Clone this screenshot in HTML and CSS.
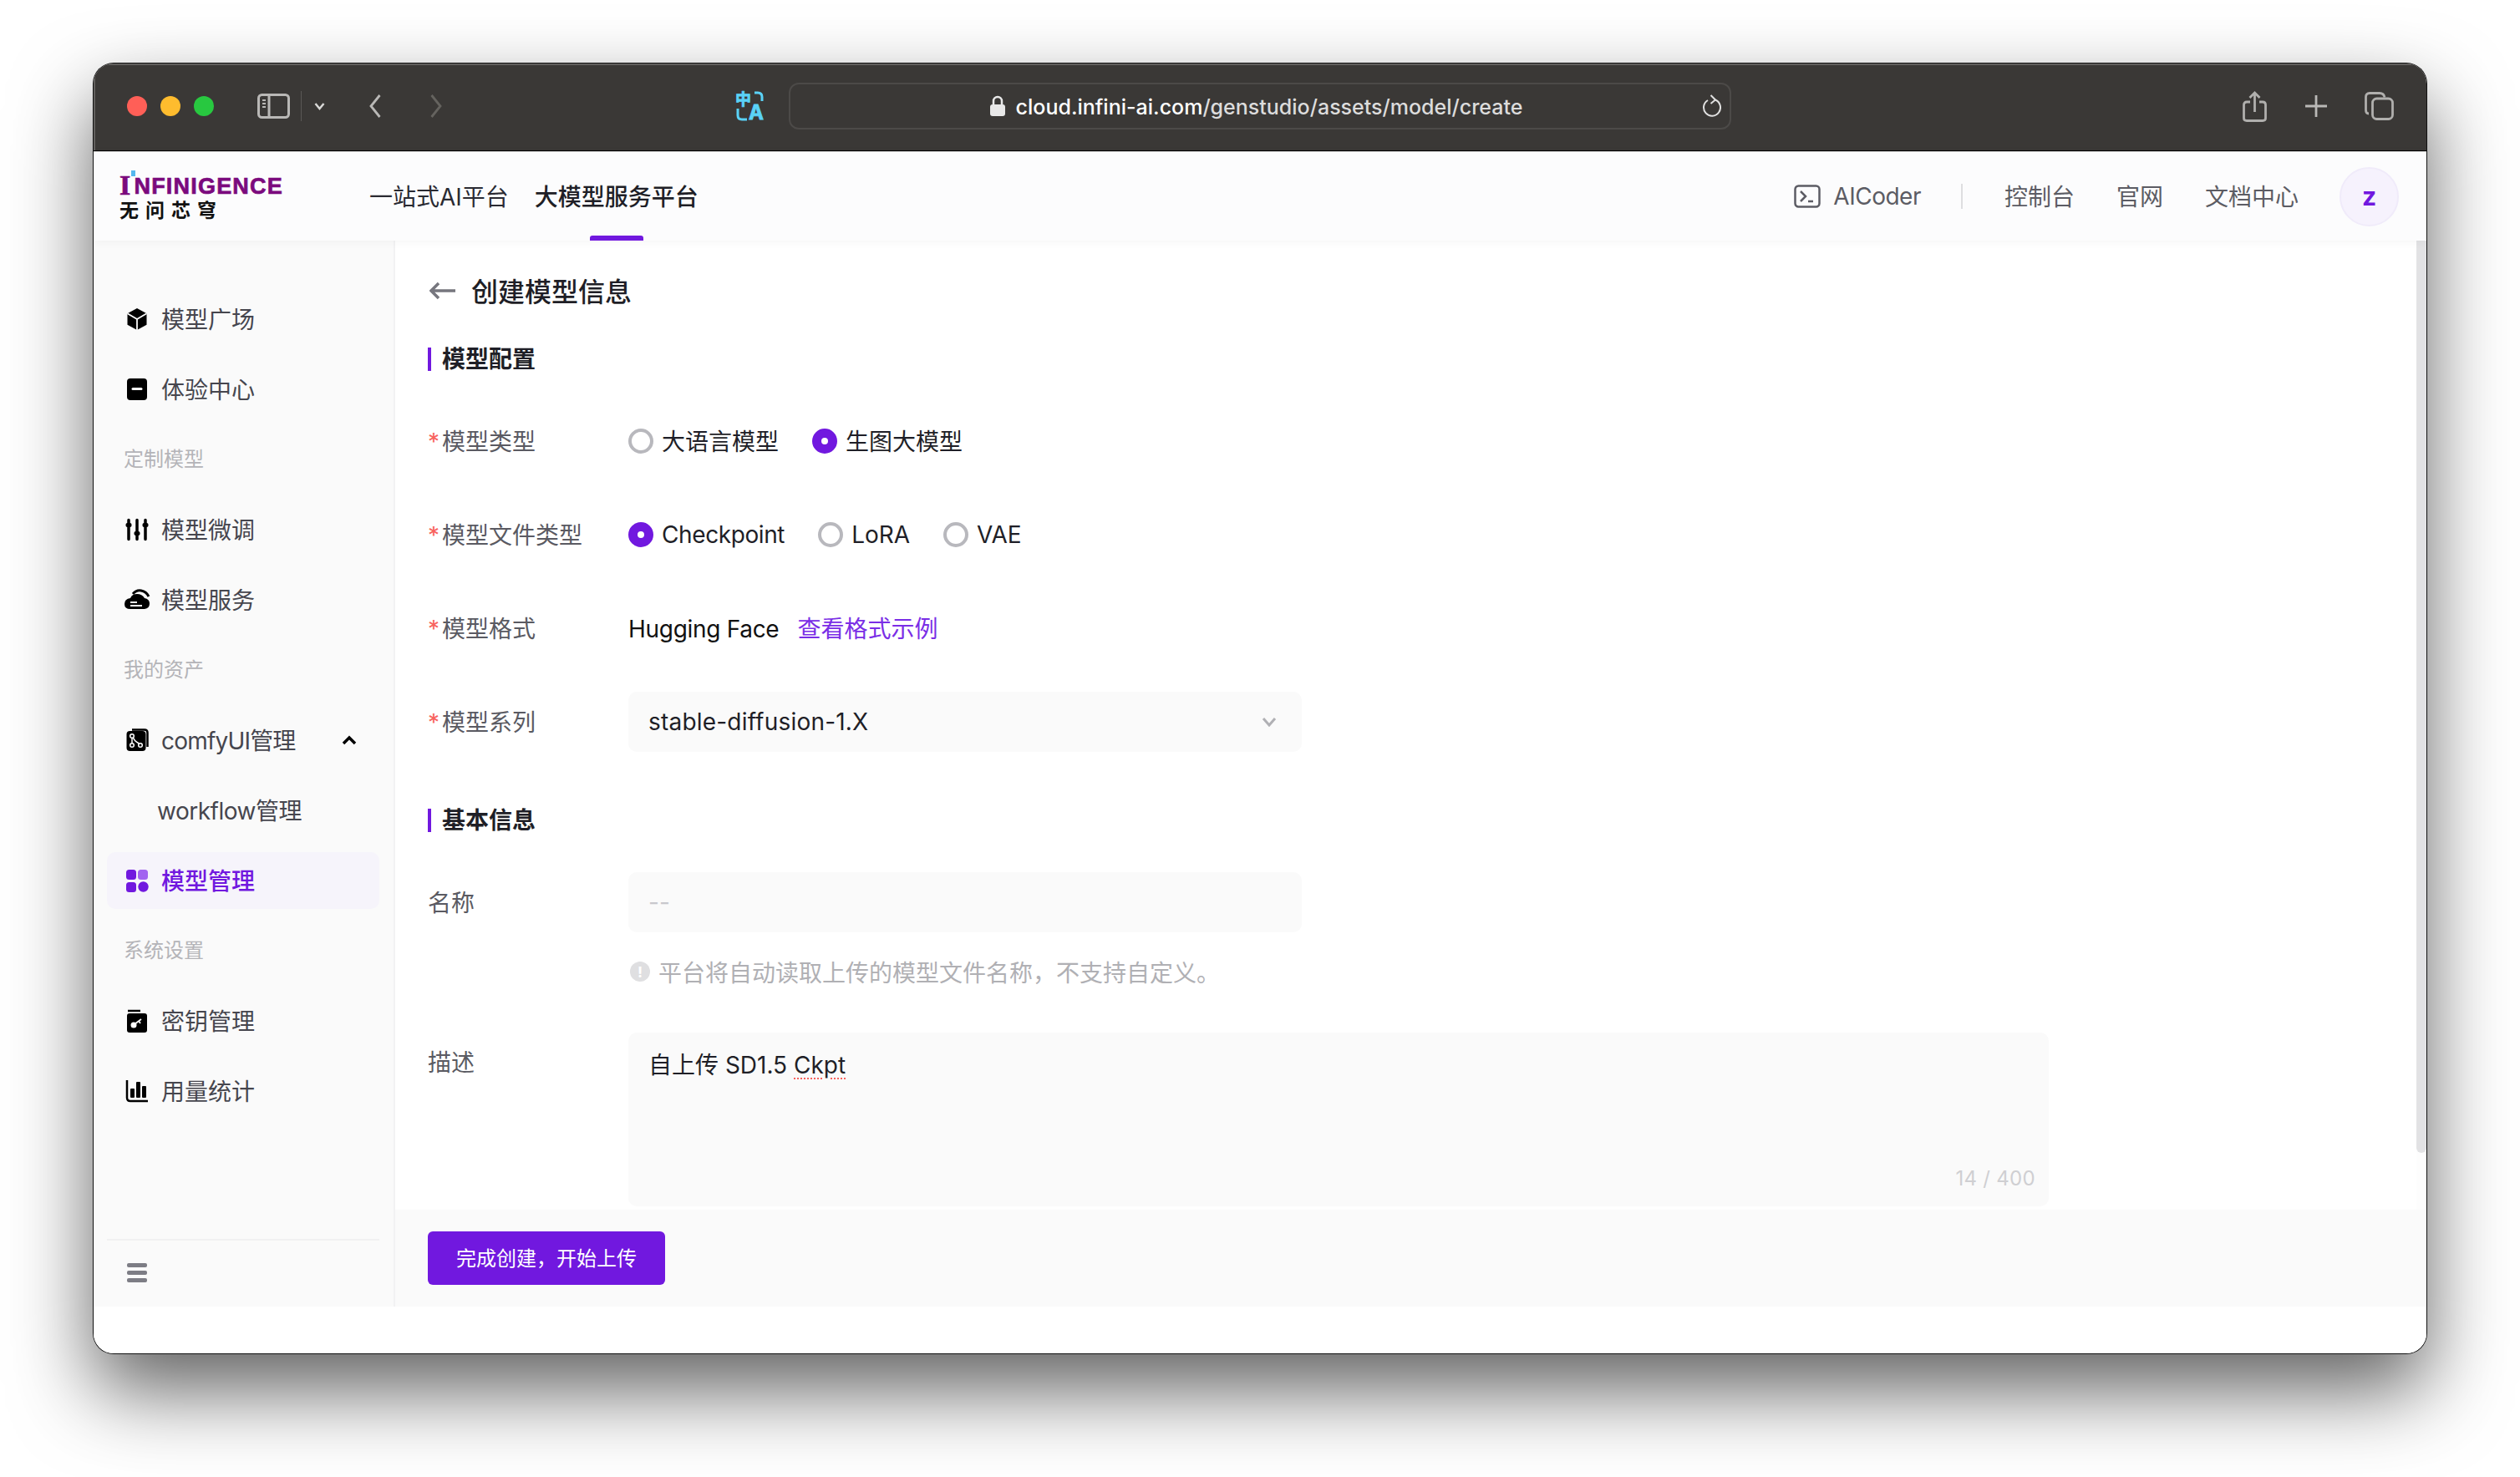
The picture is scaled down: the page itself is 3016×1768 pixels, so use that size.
FILE: index.html
```html
<!DOCTYPE html>
<html lang="zh">
<head>
<meta charset="utf-8">
<title>创建模型信息</title>
<link rel="stylesheet" href="styles.css">
</head>
<body>
<div class="window">
  <div class="toolbar">
    <span class="light red"></span><span class="light yellow"></span><span class="light green"></span>
    <svg class="t-sidebar" viewBox="0 0 39 30"><rect x="1.500" y="1.500" width="36" height="27" rx="4"/><path d="M14 1.500v27"/><path class="thin" d="M6 8h4M6 12h4M6 16h4"/></svg>
    <span class="t-div"></span>
    <svg class="t-chev" viewBox="0 0 13 10"><path d="M1.500 2l5 6 5-6"/></svg>
    <svg class="t-back" viewBox="0 0 14 30"><path d="M12.500 2L2 15l10.500 13"/></svg>
    <svg class="t-fwd" viewBox="0 0 14 30"><path d="M1.500 2L12 15 1.500 28"/></svg>
    <svg class="t-trans" viewBox="0 0 36 36"><text x="0" y="17" class="tr-zh">中</text><text x="16" y="34" class="tr-a">A</text><path d="M23 2h4q5 0 5 5v5M3 21v8q0 5 5 5h6"/></svg>
    <div class="url">
      <span></span>
      <div class="url-center">
        <svg class="lock" viewBox="0 0 20 26"><path class="shackle" d="M5 12V7a5 5 0 0 1 10 0v5"/><rect x="1" y="11" width="18" height="14" rx="3"/></svg>
        <span class="url-text"><span class="url-host">cloud.infini-ai.com</span>/genstudio/assets/model/create</span>
      </div>
      <svg class="reload" viewBox="0 0 24 28"><path d="M17 6.500A10 10 0 1 1 8 7"/><path d="M11.500 1l5.500 5.500-5.500 4.500"/></svg>
    </div>
    <svg class="t-share" viewBox="0 0 29 37"><path d="M9 13H5q-3.500 0-3.500 3.500v16q0 3 3.500 3h19q3.500 0 3.500-3v-16q0-3.500-3.500-3.500h-4M14.500 25V2M8.500 8l6-6 6 6"/></svg>
    <svg class="t-plus" viewBox="0 0 28 28"><path d="M14 1v26M1 14h26"/></svg>
    <svg class="t-tabs" viewBox="0 0 35 34"><path d="M5 26q-3.500 0-3.500-4V6q0-4.500 4.500-4.500h12q5 0 6 5"/><rect x="9.500" y="8" width="24" height="24.500" rx="5"/></svg>
  </div>

  <header class="header">
    <div class="logo">
      <div class="logo-en"><span class="logo-i">I</span>NFINIGENCE<span class="logo-dot"></span></div>
      <div class="logo-zh">无问芯穹</div>
    </div>
    <nav class="nav">
      <a class="nav-item">一站式AI平台</a>
      <a class="nav-item active">大模型服务平台</a>
    </nav>
    <div class="header-right">
      <svg class="coder-icon" viewBox="0 0 32 28"><rect x="1.500" y="1.500" width="29" height="25" rx="4"/><path d="M8 8l6 6-6 6M17 20h6"/></svg>
      <span class="coder-text">AICoder</span>
      <span class="h-div"></span>
      <a class="h-link">控制台</a>
      <a class="h-link">官网</a>
      <a class="h-link">文档中心</a>
      <span class="avatar">z</span>
    </div>
  </header>

  <div class="body">
    <aside class="sidebar">
      <div class="menu">
        <div class="item">
          <svg class="icon" viewBox="0 0 28 28"><path d="M14 1l11.500 6.200v13.600L14 27 2.500 20.800V7.200z"/><path class="cut" d="M14 14v13M14 14L2.500 7.200M14 14l11.500-6.800"/></svg>
          <span>模型广场</span>
        </div>
        <div class="item">
          <svg class="icon" viewBox="0 0 28 28"><rect x="2" y="1" width="24" height="26" rx="4"/><path class="cut thick" d="M9 13.500h10"/></svg>
          <span>体验中心</span>
        </div>
        <div class="group">定制模型</div>
        <div class="item">
          <svg class="icon" viewBox="0 0 28 28"><path class="bar" d="M4 2.500v23M14 2.500v23M24 2.500v23"/><rect x="0.500" y="6" width="7" height="5" rx="2"/><rect x="10.500" y="16" width="7" height="5" rx="2"/><rect x="20.500" y="6" width="7" height="5" rx="2"/></svg>
          <span>模型微调</span>
        </div>
        <div class="item">
          <svg class="icon icon-wide" viewBox="0 0 32 28"><path d="M8 25q-7 0-7-6t7-7q2-5 8-5t9 5q6 1 6 6.500T25 25z"/><path class="bar2" d="M11 7q4-5 10-4t9 7"/><path class="cut" d="M8 17h8M8 21h14"/></svg>
          <span>模型服务</span>
        </div>
        <div class="group">我的资产</div>
        <div class="item">
          <svg class="icon" viewBox="0 0 28 28"><rect x="1.500" y="3" width="23" height="24" rx="4"/><path class="bar3" d="M8 1.500h15q3.500 0 3.500 3.500v17"/><g class="graph"><circle cx="8" cy="9" r="2.300"/><circle cx="8" cy="20" r="2.300"/><circle cx="18" cy="20" r="2.300"/><path d="M8 11.300v6.400M9.500 11q1 4 7 7"/></g></svg>
          <span class="latin-a">comfyUI管理</span>
          <svg class="expand" viewBox="0 0 18 12"><path d="M2 10l7-7 7 7"/></svg>
        </div>
        <div class="item sub"><span class="latin-b">workflow管理</span></div>
        <div class="item active">
          <svg class="icon" viewBox="0 0 28 28"><rect x="1" y="1" width="12" height="12" rx="3.500"/><rect class="light-sq" x="15" y="1" width="12" height="12" rx="3.500"/><rect x="1" y="16" width="12" height="12" rx="3.500"/><circle cx="21.500" cy="21.500" r="6.200"/></svg>
          <span>模型管理</span>
        </div>
        <div class="group">系统设置</div>
        <div class="item">
          <svg class="icon" viewBox="0 0 28 28"><path class="bar3" d="M3 2h15"/><rect x="2" y="5" width="24" height="23" rx="3"/><circle class="white" cx="10" cy="19" r="3.500"/><path class="cut" d="M11 18l8-6M16 14l2 3"/></svg>
          <span>密钥管理</span>
        </div>
        <div class="item">
          <svg class="icon" viewBox="0 0 28 28"><path class="bar3" d="M2 1v21q0 4 4 4h21"/><rect x="6" y="11" width="5" height="11" rx="1"/><rect x="13" y="3" width="5" height="19" rx="1"/><rect x="20" y="8" width="5" height="14" rx="1"/></svg>
          <span>用量统计</span>
        </div>
      </div>
      <div class="side-bottom">
        <div class="burger"><i></i><i></i><i></i></div>
      </div>
    </aside>

    <main class="main">
      <div class="scroll-row">
        <div class="content">
          <div class="page-title">
            <svg class="back-arrow" viewBox="0 0 32 22"><path d="M31 11H3M11 2l-9 9 9 9"/></svg>
            <h1>创建模型信息</h1>
          </div>

          <h2 class="section first">模型配置</h2>

          <div class="row"><label class="label"><em>*</em>模型类型</label>
            <div class="radios">
              <span class="opt"><i class="radio"></i><b class="opt-cjk">大语言模型</b></span>
              <span class="opt"><i class="radio on"></i><b class="opt-cjk">生图大模型</b></span>
            </div>
          </div>
          <div class="row"><label class="label"><em>*</em>模型文件类型</label>
            <div class="radios">
              <span class="opt"><i class="radio on"></i><b class="opt-latin">Checkpoint</b></span>
              <span class="opt"><i class="radio"></i><b>LoRA</b></span>
              <span class="opt"><i class="radio"></i><b>VAE</b></span>
            </div>
          </div>
          <div class="row"><label class="label"><em>*</em>模型格式</label>
            <div class="format"><span class="fmt-name">Hugging Face</span><a class="link">查看格式示例</a></div>
          </div>
          <div class="row"><label class="label"><em>*</em>模型系列</label>
            <div class="field select"><span class="sel-value">stable-diffusion-1.X</span>
              <svg class="sel-chev" viewBox="0 0 18 12"><path d="M2 2l7 8 7-8"/></svg>
            </div>
          </div>

          <h2 class="section second">基本信息</h2>

          <div class="row tight"><label class="label">名称</label>
            <div class="field disabled"><span>--</span></div>
          </div>
          <div class="hint"><span class="hint-icon">!</span>平台将自动读取上传的模型文件名称，不支持自定义。</div>
          <div class="row area-row"><label class="label">描述</label>
            <div class="textarea"><span>自上传 SD1.5 <u>Ckpt</u></span><span class="count">14 / 400</span></div>
          </div>
        </div>
        <div class="scrollbar"><div class="thumb"></div></div>
      </div>
      <div class="footer"><button class="submit">完成创建，开始上传</button></div>
    </main>
  </div>
  <div class="bottom-strip"></div>
</div>
</body>
</html>
```
FILE: styles.css
```css
* { box-sizing: border-box; }
html, body { margin: 0; padding: 0; background: #fff; }
body {
  width: 3016px; height: 1768px; overflow: hidden;
  padding: 76px 0 0 112px;
  font-family: Inter, "Noto Sans CJK SC", sans-serif;
  font-size: 28px; color: #1f1f27;
}
svg { display: block; flex: none; fill: none; }

.window {
  width: 2792px; height: 1544px;
  border-radius: 24px; overflow: hidden;
  display: flex; flex-direction: column;
  background: #fff;
  box-shadow: 0 0 0 1px #111, 0 44px 96px rgba(0,0,0,.62);
}

/* browser toolbar */
.toolbar {
  height: 105px; flex: none;
  display: flex; align-items: center;
  padding: 0 0 2px 40px;
  background: #3a3836;
  border-bottom: 1px solid #000;
  box-shadow: inset 2px 2px 0 #615f5d;
}
.light { width: 24px; height: 24px; border-radius: 50%; margin-right: 16px; flex: none; }
.red { background: #ff5f57; }
.yellow { background: #febc2e; }
.green { background: #28c840; margin-right: 0; }
.t-sidebar { width: 39px; height: 30px; margin-left: 52px; stroke: #b9b8b6; stroke-width: 3; }
.t-sidebar .thin { stroke-width: 2; }
.t-div { width: 1px; height: 36px; background: #5a5856; margin-left: 13px; flex: none; }
.t-chev { width: 13px; height: 10px; margin-left: 15px; stroke: #d8d8d6; stroke-width: 2.500; }
.t-back { width: 14px; height: 30px; margin-left: 53px; stroke: #b9b8b6; stroke-width: 2.800; }
.t-fwd { width: 14px; height: 30px; margin-left: 59px; stroke: #65635f; stroke-width: 2.800; }
.t-trans { width: 36px; height: 36px; margin-left: 351px; margin-right: -2px; stroke: #5ad2f7; stroke-width: 3; overflow: visible; }
.tr-zh, .tr-a { fill: #5ad2f7; stroke: #5ad2f7; stroke-width: .8; font-weight: 700; }
.tr-zh { font-size: 19px; }
.tr-a { font-size: 24px; }
.url {
  width: 1128px; height: 56px; margin-left: 30px;
  display: grid; grid-template-columns: 1fr auto 1fr; align-items: center;
  border: 2px solid #4c4a48; border-radius: 12px;
  padding-right: 10px;
}
.url-center { display: flex; align-items: center; gap: 12px; }
.lock { width: 20px; height: 26px; fill: #e8e8e8; }
.lock .shackle { fill: none; stroke: #e8e8e8; stroke-width: 2.500; }
.url-text { font-size: 25px; color: #dcdcdc; white-space: nowrap; margin-top: 2px; font-weight: 500; }
.url-host { color: #fff; }
.reload { width: 24px; height: 28px; justify-self: end; stroke: #e0e0e0; stroke-width: 2; }
.t-share { width: 29px; height: 37px; margin-left: 612px; stroke: #b0afad; stroke-width: 2.800; }
.t-plus { width: 28px; height: 28px; margin-left: 45px; stroke: #b9b8b6; stroke-width: 2.800; }
.t-tabs { width: 35px; height: 34px; margin-left: 44px; stroke: #b0afad; stroke-width: 2.800; }

/* app header */
.header {
  height: 107px; flex: none; position: relative; z-index: 2;
  display: flex; align-items: center;
  padding: 0 33px 0 31px;
  background: #fcfcfd;
  border-top: 1px solid #cfcfcf;
  box-shadow: 0 2px 10px rgba(0,0,0,.04);
}
.logo { width: 199px; flex: none; margin-top: 2px; }
.logo-en {
  position: relative; display: flex; align-items: flex-end;
  height: 25px; line-height: 21px;
  font-family: "Liberation Sans", sans-serif; font-weight: 700; font-size: 27px;
  -webkit-text-stroke: .7px #7b0a7d;
  color: #7b0a7d; letter-spacing: 1.200px; white-space: nowrap;
}
.logo-i { font-size: 34px; line-height: 25px; font-family: "Liberation Serif", serif; margin-right: 3px; }
.logo-dot { position: absolute; left: 14px; top: -5px; width: 5px; height: 7px; background: #55b8ee; }
.logo-zh { font-size: 23px; line-height: 24px; font-weight: 700; letter-spacing: 8px; color: #111; margin-top: 6px; white-space: nowrap; }
.nav { display: flex; gap: 31px; margin-left: 100px; height: 100%; align-items: center; }
.nav-item { position: relative; height: 100%; display: flex; align-items: center; color: #2a2a32; padding-bottom: 3px; }
.nav-item.active { font-weight: 500; color: #1f1f27; }
.nav-item.active::after {
  content: ""; position: absolute; left: 50%; bottom: 0; width: 64px; height: 6px; margin-left: -32px;
  background: #7118df; border-radius: 3px 3px 0 0;
}
.header-right { margin-left: auto; display: flex; align-items: center; color: #5c5c64; }
.coder-icon { width: 32px; height: 28px; stroke: #5c5c64; stroke-width: 2.500; }
.coder-text { margin-left: 15px; letter-spacing: -.5px; }
.h-div { width: 2px; height: 30px; background: #dedee0; margin: 0 50px 0 48px; }
.h-link { margin-right: 50px; white-space: nowrap; padding-bottom: 2px; }
.h-link:last-of-type { margin-right: 49px; }
.avatar {
  width: 71px; height: 71px; border-radius: 50%;
  background: #f6f2fd; border: 2px solid #f0ebfa;
  display: flex; align-items: center; justify-content: center;
  color: #7118df; font-weight: 700; font-size: 30px;
}

/* body */
.body { flex: 1; display: flex; min-height: 0; }
.sidebar {
  width: 361px; flex: none;
  display: flex; flex-direction: column;
  padding: 60px 17px 0 16px;
  background: #fafafa;
  border-right: 2px solid #f2f2f3;
}
.menu { display: flex; flex-direction: column; gap: 16px; }
.item, .group { height: 68px; display: flex; align-items: center; border-radius: 10px; white-space: nowrap; }
.item { padding-left: 22px; color: #46464e; }
.item span { padding-bottom: 3px; }
.latin-a { letter-spacing: -.8px; }
.latin-b { letter-spacing: -.5px; }
.group { padding: 0 0 5px 20px; font-size: 24px; color: #b4b4b8; }
.item.sub { padding-left: 60px; }
.item.active { background: #f6f4fb; color: #7118df; font-weight: 500; }
.icon { width: 28px; height: 28px; margin-right: 15px; fill: #000; }
.icon-wide { width: 32px; margin-left: -2px; margin-right: 13px; }
.cut { stroke: #fafafa; stroke-width: 1.800; fill: none; }
.cut.thick { stroke-width: 3; stroke-linecap: round; }
.bar { stroke: #000; stroke-width: 3.500; stroke-linecap: round; }
.bar2 { stroke: #000; stroke-width: 3; fill: none; }
.bar3 { stroke: #000; stroke-width: 2.500; fill: none; }
.graph { stroke: #fff; stroke-width: 1.500; fill: none; }
.white { fill: #fff; }
.item.active .icon { fill: #7118df; }
.light-sq { fill: #a264f0; }
.expand { width: 18px; height: 12px; margin-left: auto; margin-right: 27px; stroke: #000; stroke-width: 3.500; }
.side-bottom { margin-top: auto; height: 81px; border-top: 2px solid #f1f1f2; padding: 27px 0 0 24px; }
.burger { width: 24px; display: flex; flex-direction: column; gap: 4px; }
.burger i { display: block; height: 5px; border-radius: 2px; background: #7d7d85; }

/* main */
.main { flex: 1; min-width: 0; display: flex; flex-direction: column; }
.scroll-row { flex: 1; min-height: 0; display: flex; background: #fff; }
.content { flex: 1; min-width: 0; overflow: hidden; padding: 40px 0 0 39px; }
.scrollbar { width: 12px; flex: none; background: #fdfdfd; }
.thumb { height: 1092px; background: #e2e2e4; border-radius: 0 0 6px 6px; }

.page-title { height: 40px; display: flex; align-items: center; }
.back-arrow { width: 32px; height: 22px; stroke: #76767e; stroke-width: 3.500; margin: 0 18px 0 2px; }
.page-title h1 { margin: 0 0 3px; font-size: 32px; font-weight: 500; color: #1f1f27; }
.section {
  margin: 0; height: 28px; line-height: 28px;
  font-size: 28px; font-weight: 600; color: #1f1f27;
  border-left: 4px solid #7118df; padding-left: 13px;
}
.section.first { margin: 48px 0; }
.section.second { margin: 68px 0 48px; }

.row { height: 72px; display: flex; align-items: center; margin-bottom: 40px; }
.row.tight { margin-bottom: 0; }
.label { width: 240px; flex: none; color: #5a5a62; white-space: nowrap; padding-bottom: 3px; }
.label em { font-style: normal; color: #f8635e; display: inline-block; width: 17px; }
.radios { display: flex; gap: 40px; }
.opt { display: flex; align-items: center; gap: 10px; white-space: nowrap; }
.opt b { font-weight: 400; }
.opt-cjk { padding-bottom: 3px; }
.opt-latin { letter-spacing: -.4px; }
.radio { width: 30px; height: 30px; border-radius: 50%; border: 4px solid #b8b8bd; background: #fff; display: block; flex: none; }
.radio.on { border: 11px solid #7118df; }
.format { display: flex; align-items: baseline; gap: 22px; color: #111; white-space: nowrap; padding-bottom: 3px; }
.fmt-name { letter-spacing: -.3px; }
.link { color: #7a2ee6; }
.field {
  width: 806px; height: 72px; border-radius: 10px; background: #fafafa;
  display: flex; align-items: center; justify-content: space-between;
  padding: 0 30px 0 24px;
}
.sel-value { letter-spacing: .2px; }
.sel-chev { width: 18px; height: 12px; stroke: #b0b0b4; stroke-width: 3; }
.disabled { color: #c8c8cc; }
.hint { display: flex; align-items: center; height: 40px; margin: 28px 0 52px 240px; color: #b0b0b4; white-space: nowrap; padding-bottom: 2px; }
.hint-icon {
  width: 24px; height: 24px; border-radius: 50%; background: #dfdfe1; color: #fff; margin-right: 10px; margin-left: 2px;
  display: flex; align-items: center; justify-content: center; font-size: 18px; font-weight: 700; flex: none;
}
.area-row { height: 208px; align-items: flex-start; margin-bottom: 0; }
.area-row .label { line-height: 72px; height: 72px; }
.textarea {
  position: relative; width: 1700px; height: 208px;
  background: #fafafa; border-radius: 10px;
  padding: 20px 24px;
  line-height: 38px;
}
.textarea u { text-decoration: underline dotted #f8635e 2px; text-underline-offset: 5px; }
.count { position: absolute; right: 16px; bottom: 18px; font-size: 24px; line-height: 30px; color: #cfcfd2; letter-spacing: .3px; }

.footer {
  height: 116px; flex: none; background: #fafafa;
  display: flex; align-items: center; padding: 0 0 0 39px;
}
.submit {
  width: 284px; height: 64px; border: 0; border-radius: 6px;
  background: #7118df; color: #fff;
  font-family: inherit; font-size: 24px; padding: 0 0 4px;
}
.bottom-strip { height: 56px; flex: none; background: #fff; }
```
